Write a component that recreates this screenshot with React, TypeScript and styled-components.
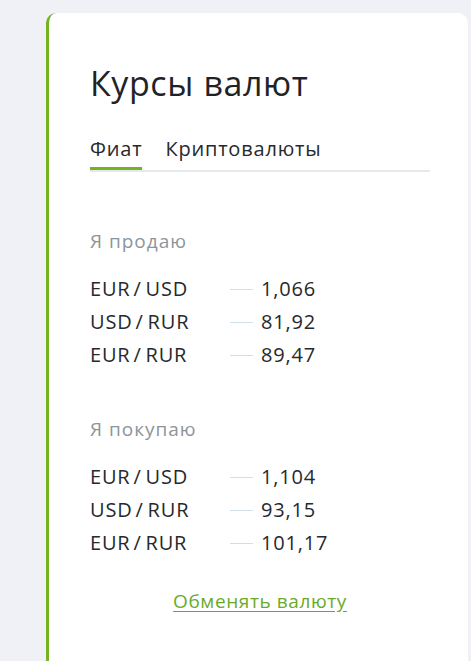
import React, { useState } from "react";
import styled, { createGlobalStyle } from "styled-components";

const GlobalStyle = createGlobalStyle`
  html, body {
    margin: 0;
    padding: 0;
    background: #eff1f6;
    font-family: "Open Sans", "Noto Sans", sans-serif;
  }
`;

interface Rate {
  pair: [string, string];
  value: string;
}

const sell: Rate[] = [
  { pair: ["EUR", "USD"], value: "1,066" },
  { pair: ["USD", "RUR"], value: "81,92" },
  { pair: ["EUR", "RUR"], value: "89,47" },
];

const buy: Rate[] = [
  { pair: ["EUR", "USD"], value: "1,104" },
  { pair: ["USD", "RUR"], value: "93,15" },
  { pair: ["EUR", "RUR"], value: "101,17" },
];

function RateGroup({ title, rates }: { title: string; rates: Rate[] }) {
  return (
    <Group>
      <GroupTitle>{title}</GroupTitle>
      <RateList>
        {rates.map((r) => (
          <RateRow key={r.pair.join("/")}>
            <Pair>
              {r.pair[0]}
              <Slash>/</Slash>
              {r.pair[1]}
            </Pair>
            <Dash />
            <Value>{r.value}</Value>
          </RateRow>
        ))}
      </RateList>
    </Group>
  );
}

export default function App() {
  const [tab, setTab] = useState("fiat");

  return (
    <>
      <GlobalStyle />
      <Page>
        <Card>
          <Title>Курсы валют</Title>
          <Tabs>
            <Tab $active={tab === "fiat"} onClick={() => setTab("fiat")}>
              Фиат
            </Tab>
            <Tab $active={tab === "crypto"} onClick={() => setTab("crypto")}>
              Криптовалюты
            </Tab>
          </Tabs>
          <RateGroup title="Я продаю" rates={sell} />
          <RateGroup title="Я покупаю" rates={buy} />
          <Footer>
            <ExchangeLink href="#">Обменять валюту</ExchangeLink>
          </Footer>
        </Card>
      </Page>
    </>
  );
}

const Page = styled.div`
  padding: 13px 3px 0 46px;
  height: 661px;
  box-sizing: border-box;
  overflow: hidden;
`;

const Card = styled.div`
  background: #fff;
  border-left: 3px solid #72b322;
  border-radius: 10px;
  padding: 50px 38px 60px 41px;
  min-height: 700px;
  box-sizing: border-box;
`;

const Title = styled.h1`
  margin: 0;
  font-size: 34px;
  font-weight: 400;
  line-height: 40px;
  color: #1f2328;
  letter-spacing: 0.6px;
`;

const Tabs = styled.div`
  display: flex;
  gap: 23px;
  margin-top: 34px;
  border-bottom: 2px solid #e6e8eb;
`;

const Tab = styled.button<{ $active: boolean }>`
  border: none;
  background: none;
  padding: 0 0 6px;
  font-family: inherit;
  font-size: 20px;
  line-height: 24px;
  letter-spacing: 0.8px;
  color: #26292d;
  cursor: pointer;
  border-bottom: 3px solid ${(p) => (p.$active ? "#72b322" : "transparent")};
`;

const Group = styled.div`
  margin-top: 58px;

  & + & {
    margin-top: 51px;
  }
`;

const GroupTitle = styled.div`
  font-size: 19px;
  line-height: 22px;
  letter-spacing: 1px;
  color: #8b959b;
`;

const RateList = styled.div`
  margin-top: 25px;
  display: flex;
  flex-direction: column;
  gap: 9px;
`;

const RateRow = styled.div`
  display: flex;
  align-items: center;
  font-size: 20px;
  line-height: 24px;
  letter-spacing: 0.8px;
  color: #26292d;
`;

const Pair = styled.span`
  width: 140px;
`;

const Slash = styled.span`
  margin: 0 4px 0 3px;
`;

const Dash = styled.span`
  width: 23px;
  height: 1px;
  background: #cfe0e8;
  margin-right: 8px;
`;

const Value = styled.span``;

const Footer = styled.div`
  margin-top: 33px;
  text-align: center;
`;

const ExchangeLink = styled.a`
  font-size: 19px;
  letter-spacing: 0.6px;
  color: #6aaa2a;
  text-decoration: underline;
  text-underline-offset: 3px;
`;
